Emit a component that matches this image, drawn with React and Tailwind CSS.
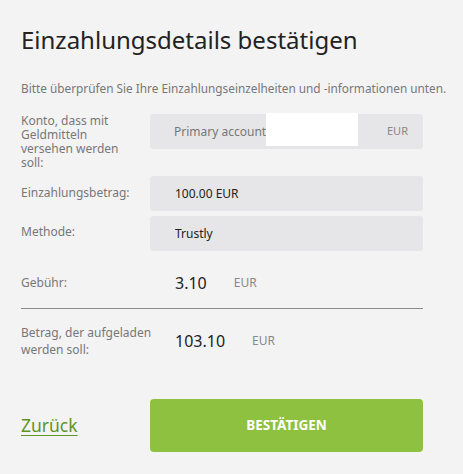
export default function App() {
  return (
    <div
      className="w-[463px] h-[474px] bg-[#f3f3f4] text-[#333] overflow-hidden"
      style={{ fontFamily: '"Noto Sans", "Open Sans", sans-serif' }}
    >
      <div className="pl-[21px] pr-[40px] pt-[25px]">
        <h1 className="text-[24px] leading-[30px] text-[#222] font-normal whitespace-nowrap">
          Einzahlungsdetails bestätigen
        </h1>
        <p className="mt-[25px] text-[11.8px] leading-[16px] text-[#777] whitespace-nowrap">
          Bitte überprüfen Sie Ihre Einzahlungseinzelheiten und -informationen unten.
        </p>

        <div className="mt-[18px] flex items-start">
          <div className="w-[129px] shrink-0">
            <div className="w-[100px] text-[12px] leading-[14px] text-[#777]">
              Konto, dass mit Geldmitteln versehen werden soll:
            </div>
          </div>
          <div className="flex-1 h-[35px] rounded-[3px] bg-[#e6e6e8] flex items-center pl-[24px] pr-[15px] text-[12px] text-[#777]">
            <span>Primary account</span>
            <span className="w-[92px] h-[33px] bg-white self-start -mt-px" />
            <span className="ml-auto text-[11px] text-[#888]">EUR</span>
          </div>
        </div>

        <div className="mt-[6px] flex items-start">
          <div className="w-[129px] shrink-0 text-[12px] leading-[14px] text-[#777] pt-[10px]">
            Einzahlungsbetrag:
          </div>
          <div className="flex-1 h-[35px] rounded-[3px] bg-[#e6e6e8] flex items-center pl-[25px] text-[12px] text-[#222]">
            100.00 EUR
          </div>
        </div>

        <div className="mt-[5px] flex items-start">
          <div className="w-[129px] shrink-0 text-[12px] leading-[14px] text-[#777] pt-[9px]">
            Methode:
          </div>
          <div className="flex-1 h-[35px] rounded-[3px] bg-[#e6e6e8] flex items-center pl-[25px] text-[12px] text-[#222]">
            Trustly
          </div>
        </div>

        <div className="mt-[20px] flex items-center h-[24px]">
          <div className="w-[129px] shrink-0 text-[12px] text-[#777]">Gebühr:</div>
          <div className="pl-[25px] text-[16px] text-[#222]">3.10</div>
          <div className="pl-[27px] text-[12px] text-[#888]">EUR</div>
        </div>

        <div className="mt-[13px] h-px bg-[#8a8a8a]" />

        <div className="mt-[15px] flex items-center">
          <div className="w-[129px] shrink-0 text-[12px] leading-[17px] text-[#777]">
            <div className="w-[135px]">Betrag, der aufgeladen werden soll:</div>
          </div>
          <div className="pl-[25px] text-[16px] text-[#222]">103.10</div>
          <div className="pl-[27px] text-[12px] text-[#888]">EUR</div>
        </div>

        <div className="mt-[41px] flex items-center">
          <div className="w-[129px] shrink-0">
            <a className="text-[17.5px] text-[#5f9524] underline underline-offset-[3px]">Zurück</a>
          </div>
          <button className="flex-1 h-[53px] rounded-[4px] bg-[#8dc13f] text-white font-bold text-[13.5px]">
            BESTÄTIGEN
          </button>
        </div>
      </div>
    </div>
  );
}
